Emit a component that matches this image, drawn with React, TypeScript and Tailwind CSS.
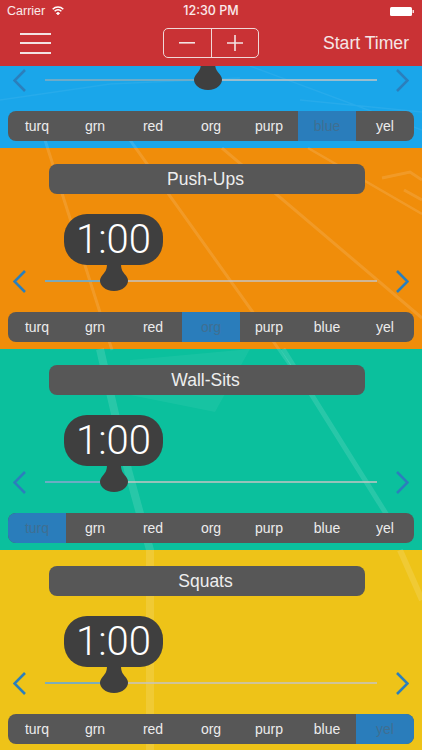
const labelFont = { fontFamily: '"Liberation Sans", Arial, sans-serif' };

const colors = ["turq", "grn", "red", "org", "purp", "blue", "yel"];

interface Workout {
  title?: string;
  color: string;
  bg: string;
  thumbX: number;
  offset: number;
  height: number;
}

const workouts: Workout[] = [
  { color: "blue", bg: "bg-[#1aa6ea]", thumbX: 208, offset: 66, height: 82 },
  { title: "Push-Ups", color: "org", bg: "bg-[#f08d0a]", thumbX: 114, offset: 148, height: 201 },
  { title: "Wall-Sits", color: "turq", bg: "bg-[#0bc09d]", thumbX: 114, offset: 349, height: 201 },
  { title: "Squats", color: "yel", bg: "bg-[#eec318]", thumbX: 114, offset: 550, height: 200 },
];

// painted running track behind the controls, one drawing shared by all strips
function TrackLines({ offset, height }: { offset: number; height: number }) {
  return (
    <svg
      className="absolute inset-0 w-full h-full"
      viewBox={`0 ${offset} 422 ${height}`}
      preserveAspectRatio="none"
      fill="none"
      stroke="#ffffff"
      strokeOpacity="0.12"
    >
      <path d="M45 140L112 350" strokeWidth="3" />
      <path d="M130 140L262 325L300 380" strokeWidth="3" />
      <path d="M222 148L422 318" strokeWidth="3" />
      <path d="M308 148L422 214" strokeWidth="2.5" />
      <path d="M100 349L128 470L150 550L150 750" strokeWidth="8" />
      <path d="M283 349L390 520" strokeWidth="5" />
      <path d="M400 550L422 600" strokeWidth="6" />
      <path d="M0 100L110 84L240 78M250 66L422 130M300 100L422 112" strokeWidth="1.5" strokeOpacity="0.06" />
      <path d="M382 178L410 172L422 180M404 190L422 200" strokeWidth="3" />
      <path d="M130 360L250 349L215 412L130 395Z" fill="#ffffff" fillOpacity="0.05" strokeWidth="0" />
    </svg>
  );
}

function Chevron({ dir }: { dir: "left" | "right" }) {
  return (
    <svg width="13" height="23" viewBox="0 0 13 23" fill="none" className="shrink-0">
      <path
        d={dir === "left" ? "M12 1L1.5 11.5L12 22" : "M1 1L11.5 11.5L1 22"}
        stroke="#2b7fbc"
        strokeWidth="2.6"
      />
    </svg>
  );
}

function Thumb({ x, time }: { x: number; time?: string }) {
  // x is the page position of the knob centre; track starts at 45
  return (
    <div className="absolute top-[-66px] w-[99px] h-[77px]" style={{ left: x - 45 - 50 }}>
      <svg width="99" height="77" viewBox="0 0 99 77" className="absolute inset-0">
        <rect width="99" height="51" rx="23" fill="#3f3f3f" />
        <path
          d="M43 50C43 56 41 58 38.500 61C36.500 63.500 36 65 36 67C36 71 41 77 50 77C59 77 64 71 64 67C64 65 63.500 63.500 61.500 61C59 58 57 56 57 50Z"
          fill="#3f3f3f"
        />
      </svg>
      {time && (
        <div
          className="absolute top-0 left-0 w-full h-[51px] flex items-center justify-center text-[40px] text-white font-light"
          style={{ fontFamily: 'Roboto, "Liberation Sans", sans-serif' }}
        >
          {time}
        </div>
      )}
    </div>
  );
}

function Slider({ thumbX, time }: { thumbX: number; time?: string }) {
  return (
    <div className="flex items-center h-[30px] px-[13px] gap-[19px]">
      <Chevron dir="left" />
      <div className="relative flex-1 h-[2px] bg-[#c4c4c4]/75">
        <div className="h-full bg-[#5aa4c8]/70" style={{ width: thumbX - 45 }} />
        <Thumb x={thumbX} time={time} />
      </div>
      <Chevron dir="right" />
    </div>
  );
}

function ColorPicker({ active }: { active: string }) {
  return (
    <div className="mx-2 h-[30px] grid grid-cols-7 rounded-lg overflow-hidden bg-[#575757]">
      {colors.map((c) => (
        <div
          key={c}
          className={`flex items-center justify-center text-[14px] ${
            c === active ? "bg-[#2a7dbb] text-[#3f6f92]" : "text-[#ececec]"
          }`}
        >
          {c}
        </div>
      ))}
    </div>
  );
}

function WorkoutRow({ w }: { w: Workout }) {
  return (
    <section
      className={`relative overflow-hidden flex flex-col justify-end ${w.bg} ${w.height === 82 ? "h-[82px] pb-[7px]" : w.height === 201 ? "h-[201px] pb-[7px]" : "h-[200px] pb-[6px]"}`}
    >
      <TrackLines offset={w.offset} height={w.height} />
      <div className="relative shrink-0">
        {w.title && (
          <div className="mx-[49px] w-[316px] h-[30px] rounded-lg bg-[#575757] flex items-center justify-center pr-[3px] text-[17.5px] text-[#eeeeee] mb-[72px]">
            {w.title}
          </div>
        )}
        <Slider thumbX={w.thumbX} time={w.title ? "1:00" : undefined} />
        <div className="mt-4">
          <ColorPicker active={w.color} />
        </div>
      </div>
    </section>
  );
}

function StatusBar() {
  return (
    <div className="relative h-5 flex items-center justify-between pl-[7px] pr-2 text-[12.5px] text-white/90 pt-[2px]">
      <div className="flex items-center gap-[7px]">
        <span>Carrier</span>
        <svg width="12" height="10" viewBox="0 0 12 10" fill="none" stroke="#ffffff" strokeWidth="1.5">
          <path d="M0.7 3.2C3.6 0.3 8.4 0.3 11.3 3.2" />
          <path d="M2.6 5.2C4.5 3.4 7.5 3.4 9.4 5.2" />
          <path d="M4.5 7.2C5.4 6.4 6.6 6.4 7.5 7.2L6 8.8Z" fill="#ffffff" strokeWidth="1" />
        </svg>
      </div>
      <span
        className="absolute left-0 right-0 text-center font-medium text-[12.5px] pointer-events-none"
        style={{ fontFamily: 'Inter, "Liberation Sans", sans-serif' }}
      >
        12:30 PM
      </span>
      <svg width="24" height="9" viewBox="0 0 24 9">
        <rect width="22" height="9" rx="1.5" fill="#ffffff" />
        <rect x="22.5" y="3" width="1.5" height="3" fill="#ffffff" fillOpacity="0.8" />
      </svg>
    </div>
  );
}

function NavBar() {
  return (
    <div className="h-[46px] grid grid-cols-[1fr_auto_1fr] items-center">
      <div className="pl-5 flex flex-col gap-[7.5px] w-[51px]">
        <div className="h-[2px] w-[31px] bg-[#f3e3e3]" />
        <div className="h-[2px] w-[31px] bg-[#f3e3e3]" />
        <div className="h-[2px] w-[31px] bg-[#f3e3e3]" />
      </div>
      <div className="w-[96px] h-[30px] rounded-[5px] border border-[#f0d8d8] flex">
        <div className="flex-1 flex items-center justify-center border-r border-[#f0d8d8]">
          <svg width="16" height="2" viewBox="0 0 16 2">
            <rect width="16" height="1.6" fill="#f3e3e3" />
          </svg>
        </div>
        <div className="flex-1 flex items-center justify-center">
          <svg width="16" height="16" viewBox="0 0 16 16">
            <path d="M0 8H16M8 0V16" stroke="#f3e3e3" strokeWidth="1.6" />
          </svg>
        </div>
      </div>
      <div className="text-right pr-[13px] text-[17.6px] text-[#f5e6e6]">Start Timer</div>
    </div>
  );
}

export default function App() {
  return (
    <div className="w-[422px] h-[750px] overflow-hidden flex flex-col" style={labelFont}>
      <header className="h-[66px] shrink-0 bg-[#c93235] relative z-10">
        <StatusBar />
        <NavBar />
      </header>
      {workouts.map((w) => (
        <WorkoutRow key={w.offset} w={w} />
      ))}
    </div>
  );
}
